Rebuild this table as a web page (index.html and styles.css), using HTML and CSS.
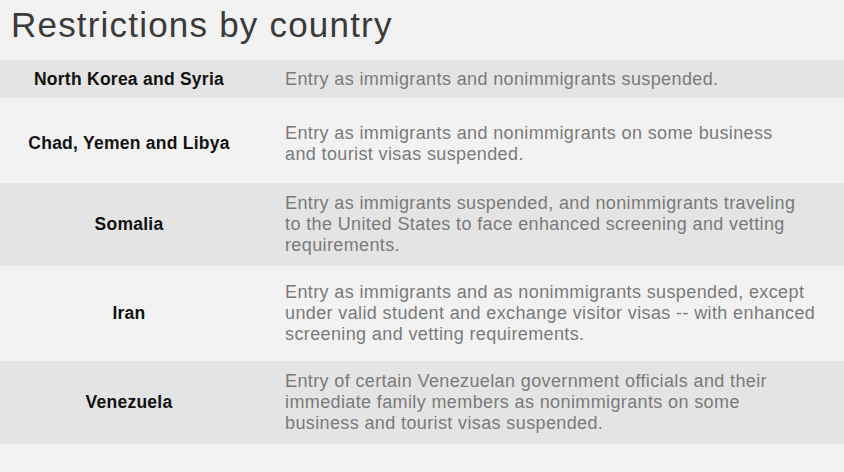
FILE: index.html
```html
<!DOCTYPE html>
<html lang="en">
<head>
<meta charset="utf-8">
<title>Restrictions by country</title>
<link rel="stylesheet" href="styles.css">
</head>
<body>
<div class="page">
  <h1 class="title">Restrictions by country</h1>
  <div class="table">
    <div class="row row-a shade">
      <div class="country">North Korea and Syria</div>
      <div class="desc">Entry as immigrants and nonimmigrants suspended.</div>
    </div>
    <div class="row row-b">
      <div class="country">Chad, Yemen and Libya</div>
      <div class="desc">Entry as immigrants and nonimmigrants on some business<br>and tourist visas suspended.</div>
    </div>
    <div class="row row-c shade">
      <div class="country">Somalia</div>
      <div class="desc">Entry as immigrants suspended, and nonimmigrants traveling<br>to the United States to face enhanced screening and vetting<br>requirements.</div>
    </div>
    <div class="row row-d">
      <div class="country">Iran</div>
      <div class="desc">Entry as immigrants and as nonimmigrants suspended, except<br>under valid student and exchange visitor visas -- with enhanced<br>screening and vetting requirements.</div>
    </div>
    <div class="row row-e shade">
      <div class="country">Venezuela</div>
      <div class="desc">Entry of certain Venezuelan government officials and their<br>immediate family members as nonimmigrants on some<br>business and tourist visas suspended.</div>
    </div>
  </div>
</div>
</body>
</html>
```

FILE: styles.css
```css
html, body {
  margin: 0;
  padding: 0;
  background: #f2f2f2;
}

.page {
  width: 844px;
  height: 472px;
  background: #f2f2f2;
  font-family: "Liberation Sans", Arial, sans-serif;
  overflow: hidden;
}

.title {
  margin: 0;
  padding: 5px 0 0 11px;
  height: 55px;
  font-size: 35px;
  line-height: 40px;
  font-weight: 400;
  letter-spacing: 1.2px;
  color: #3a3a3a;
}

.table {
  display: flex;
  flex-direction: column;
}

.row {
  display: grid;
  grid-template-columns: 258px 1fr;
  align-items: center;
}

.shade {
  background: #e4e4e4;
}

.row-a { height: 38px; }
.row-b { height: 85px; padding-top: 6px; box-sizing: border-box; }
.row-c { height: 83px; }
.row-d { height: 95px; }
.row-e { height: 83px; }

.country {
  text-align: center;
  font-size: 17.5px;
  font-weight: 700;
  letter-spacing: 0.25px;
  color: #111111;
}

.desc {
  padding-left: 27px;
  font-size: 18px;
  line-height: 21px;
  letter-spacing: 0.38px;
  color: #7a7a7a;
}
```
